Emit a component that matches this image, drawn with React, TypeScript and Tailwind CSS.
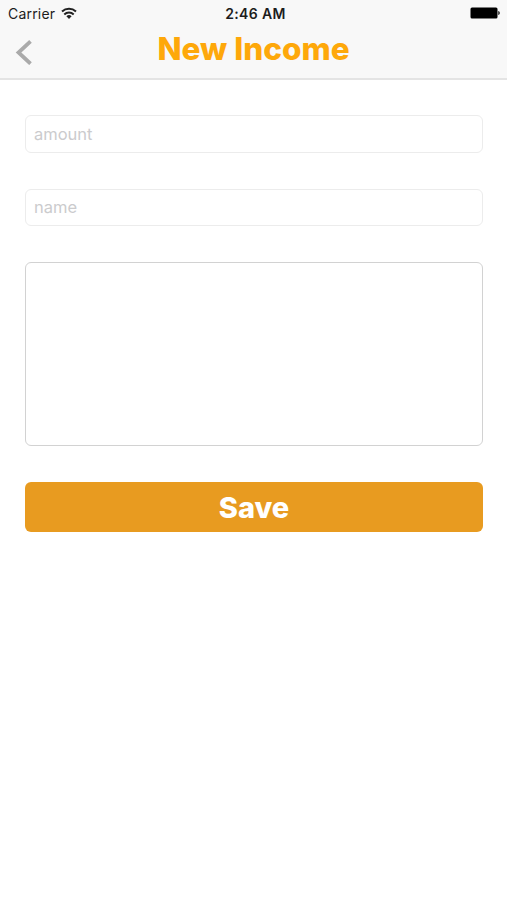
import { useState } from 'react';

function StatusBar() {
    return (
        <div className="grid h-[26px] grid-cols-3 items-center pr-1.5 pl-2 text-[14px] text-[#1c1c1c]">
            <div className="flex items-center gap-1.5">
                <span className="tracking-[0.2px]">Carrier</span>
                <svg width="16" height="12" viewBox="0 0 16 12" fill="none" stroke="#222" strokeWidth="2">
                    <path d="M1 4.4a10.4 10.4 0 0 1 14 0" />
                    <path d="M3.3 7.4a6.9 6.9 0 0 1 9.4 0" />
                    <path d="M8 11.9 5.4 9.3a3.8 3.8 0 0 1 5.2 0Z" fill="#222" stroke="none" />
                </svg>
            </div>
            <div className="pl-0.5 text-center font-semibold tracking-[0.35px]">2:46 AM</div>
            <div className="flex items-center justify-end">
                <svg width="31" height="12" viewBox="0 0 31 12">
                    <rect x="0.5" y="0.5" width="27" height="11" rx="1.5" fill="#000" />
                    <path d="M28.2 4v4c2.2-.6 2.2-3.4 0-4Z" fill="#333" />
                </svg>
            </div>
        </div>
    );
}

export default function NewIncomePage() {
    const [formData, setFormData] = useState({ amount: '', name: '', note: '' });

    const handleChange = (e: React.ChangeEvent<HTMLInputElement | HTMLTextAreaElement>) => {
        setFormData({ ...formData, [e.target.name]: e.target.value });
    };

    return (
        <div className="min-h-screen bg-white font-['Inter',sans-serif]">
            <header className="h-20 border-b-2 border-[#e4e4e4] bg-[#f8f8f8]">
                <StatusBar />
                <div className="grid h-[52px] grid-cols-[48px_1fr_48px] items-center">
                    <button type="button" aria-label="Back" className="pl-[15px]">
                        <svg width="18" height="26" viewBox="0 0 18 26" fill="none" stroke="#aaa" strokeWidth="3.8">
                            <path d="M15.5 2.3 3.5 13.5l12 11.2" />
                        </svg>
                    </button>
                    <h1 className="pb-1.5 text-center text-[31.5px] leading-10 font-extrabold text-[#fea80a]">
                        New Income
                    </h1>
                </div>
            </header>

            <form className="pt-[35px] pr-6 pl-[25px]" onSubmit={(e) => e.preventDefault()}>
                <input
                    name="amount"
                    value={formData.amount}
                    onChange={handleChange}
                    className="block h-[38px] w-full rounded-md border border-[#ececec] px-2 pb-px text-[16.5px] placeholder-[#cbcbcd] focus:outline-none"
                    placeholder="amount"
                />
                <input
                    name="name"
                    value={formData.name}
                    onChange={handleChange}
                    className="mt-[36px] block h-[37px] w-full rounded-md border border-[#ececec] px-2 pb-0.5 text-[16.5px] placeholder-[#cbcbcd] focus:outline-none"
                    placeholder="name"
                />
                <textarea
                    name="note"
                    value={formData.note}
                    onChange={handleChange}
                    className="mt-[36px] block h-[184px] w-full resize-none rounded-md border border-[#d2d2d2] p-2 text-[17px] focus:outline-none"
                />
                <button
                    type="submit"
                    className="mt-[36px] block h-[50px] w-full rounded-md bg-[#e89b20] text-[29px] leading-none font-extrabold text-white"
                >
                    Save
                </button>
            </form>
        </div>
    );
}
